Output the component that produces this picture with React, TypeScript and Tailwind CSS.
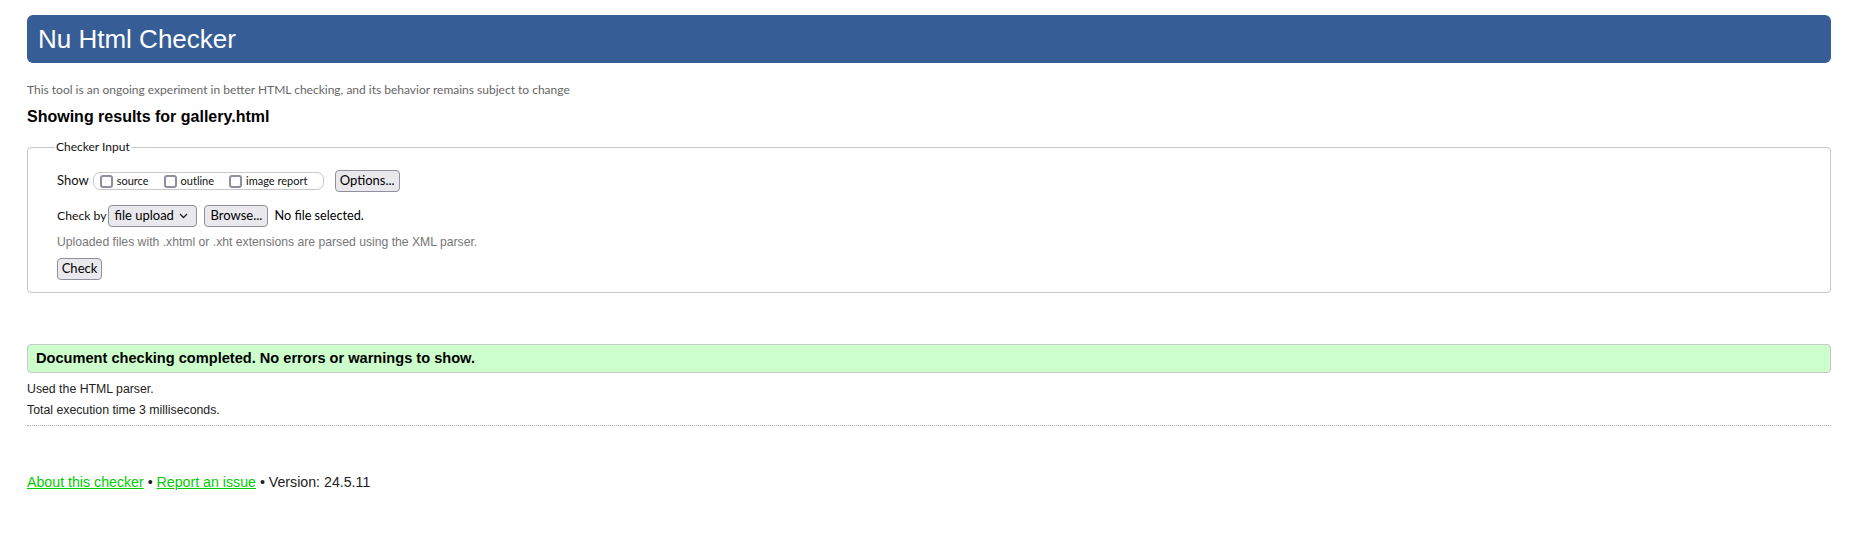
import React from "react";

const ui = { fontFamily: "Lato, 'Liberation Sans', sans-serif" };

function Box({ label }: { label: string }) {
  return (
    <span className="flex items-center">
      <span className="w-[13px] h-[13px] border-2 border-[#8f8f9d] rounded-[3px] bg-white box-border" />
      <span className="ml-[4px] text-[11px] text-[#111]" style={ui}>{label}</span>
    </span>
  );
}

function Btn({ children, className = "" }: { children: React.ReactNode; className?: string }) {
  return (
    <span
      className={"inline-flex items-center justify-center h-[22px] px-[6px] border border-[#8f8f9d] rounded-[4px] bg-[#e9e9ed] text-[13px] text-black " + className}
      style={ui}
    >
      {children}
    </span>
  );
}

export default function App() {
  return (
    <div className="bg-white min-h-[538px] pl-[27px] pr-[32px] pt-[15px] text-[#111]" style={{ fontFamily: "'Liberation Sans', Arial, sans-serif" }}>
      <h1 className="h-[48px] bg-[#365d95] rounded-[6px] text-white text-[26px] pl-[11px] flex items-center leading-none">
        Nu Html Checker
      </h1>
      <p className="mt-[20px] text-[12px] leading-[14px] text-[#666]" style={ui}>
        This tool is an ongoing experiment in better HTML checking, and its behavior remains subject to change
      </p>
      <h2 className="mt-[11px] text-[16px] font-bold leading-[18px] text-black">Showing results for gallery.html</h2>

      <fieldset className="mt-[14px] border border-[#c8c8c8] rounded-[4px] pb-[12px]">
        <legend className="ml-[27px] px-[1px] text-[12px] leading-[14px] text-[#111]" style={ui}>Checker Input</legend>
        <div className="pl-[29px]">
          <div className="mt-[16px] flex items-center h-[22px]">
            <span className="text-[13px] text-[#111] mr-[4px]" style={ui}>Show</span>
            <span className="flex items-center h-[18px] border border-[#c8c8c8] rounded-[7px] pl-[6px] pr-[4px] gap-[15px] w-[231px]">
              <Box label="source" />
              <Box label="outline" />
              <Box label="image report" />
            </span>
            <Btn className="ml-[11px] w-[65px]">Options...</Btn>
          </div>
          <div className="mt-[13px] flex items-center h-[22px]">
            <span className="text-[12.2px] text-[#111] mr-[2px]" style={ui}>Check by</span>
            <span className="inline-flex items-center justify-between h-[22px] w-[89px] pl-[5px] pr-[8px] border border-[#8f8f9d] rounded-[4px] bg-[#e9e9ed] text-[13px] text-black" style={ui}>
              file upload
              <svg width="9" height="6" viewBox="0 0 9 6" className="ml-[4px]">
                <path d="M1 1 L4.5 4.5 L8 1" stroke="#222" strokeWidth="1.3" fill="none" />
              </svg>
            </span>
            <Btn className="ml-[7px] w-[64px]">Browse...</Btn>
            <span className="ml-[6px] text-[12.7px] text-black" style={ui}>No file selected.</span>
          </div>
          <p className="mt-[8px] text-[12.2px] leading-[14px] text-[#777]">
            Uploaded files with .xhtml or .xht extensions are parsed using the XML parser.
          </p>
          <div className="mt-[7px]">
            <Btn className="w-[45px] h-[21px]">Check</Btn>
          </div>
        </div>
      </fieldset>

      <div className="mt-[51px] h-[29px] flex items-center pl-[8px] bg-[#ccffcc] border border-[#c8c8c8] rounded-[4px] text-[14.6px] font-bold text-black">
        Document checking completed. No errors or warnings to show.
      </div>
      <p className="mt-[9px] text-[12.3px] leading-[14px] text-[#222]">Used the HTML parser.</p>
      <p className="mt-[7px] text-[12.3px] leading-[14px] text-[#222]">Total execution time 3 milliseconds.</p>
      <div className="mt-[8px] border-t border-dotted border-[#aaa]" />
      <p className="mt-[48px] text-[14.2px] leading-[16px] text-[#222]">
        <a className="text-[#00cc00] underline" href="#">About this checker</a>
        {" • "}
        <a className="text-[#00cc00] underline" href="#">Report an issue</a>
        {" • Version: 24.5.11"}
      </p>
    </div>
  );
}
